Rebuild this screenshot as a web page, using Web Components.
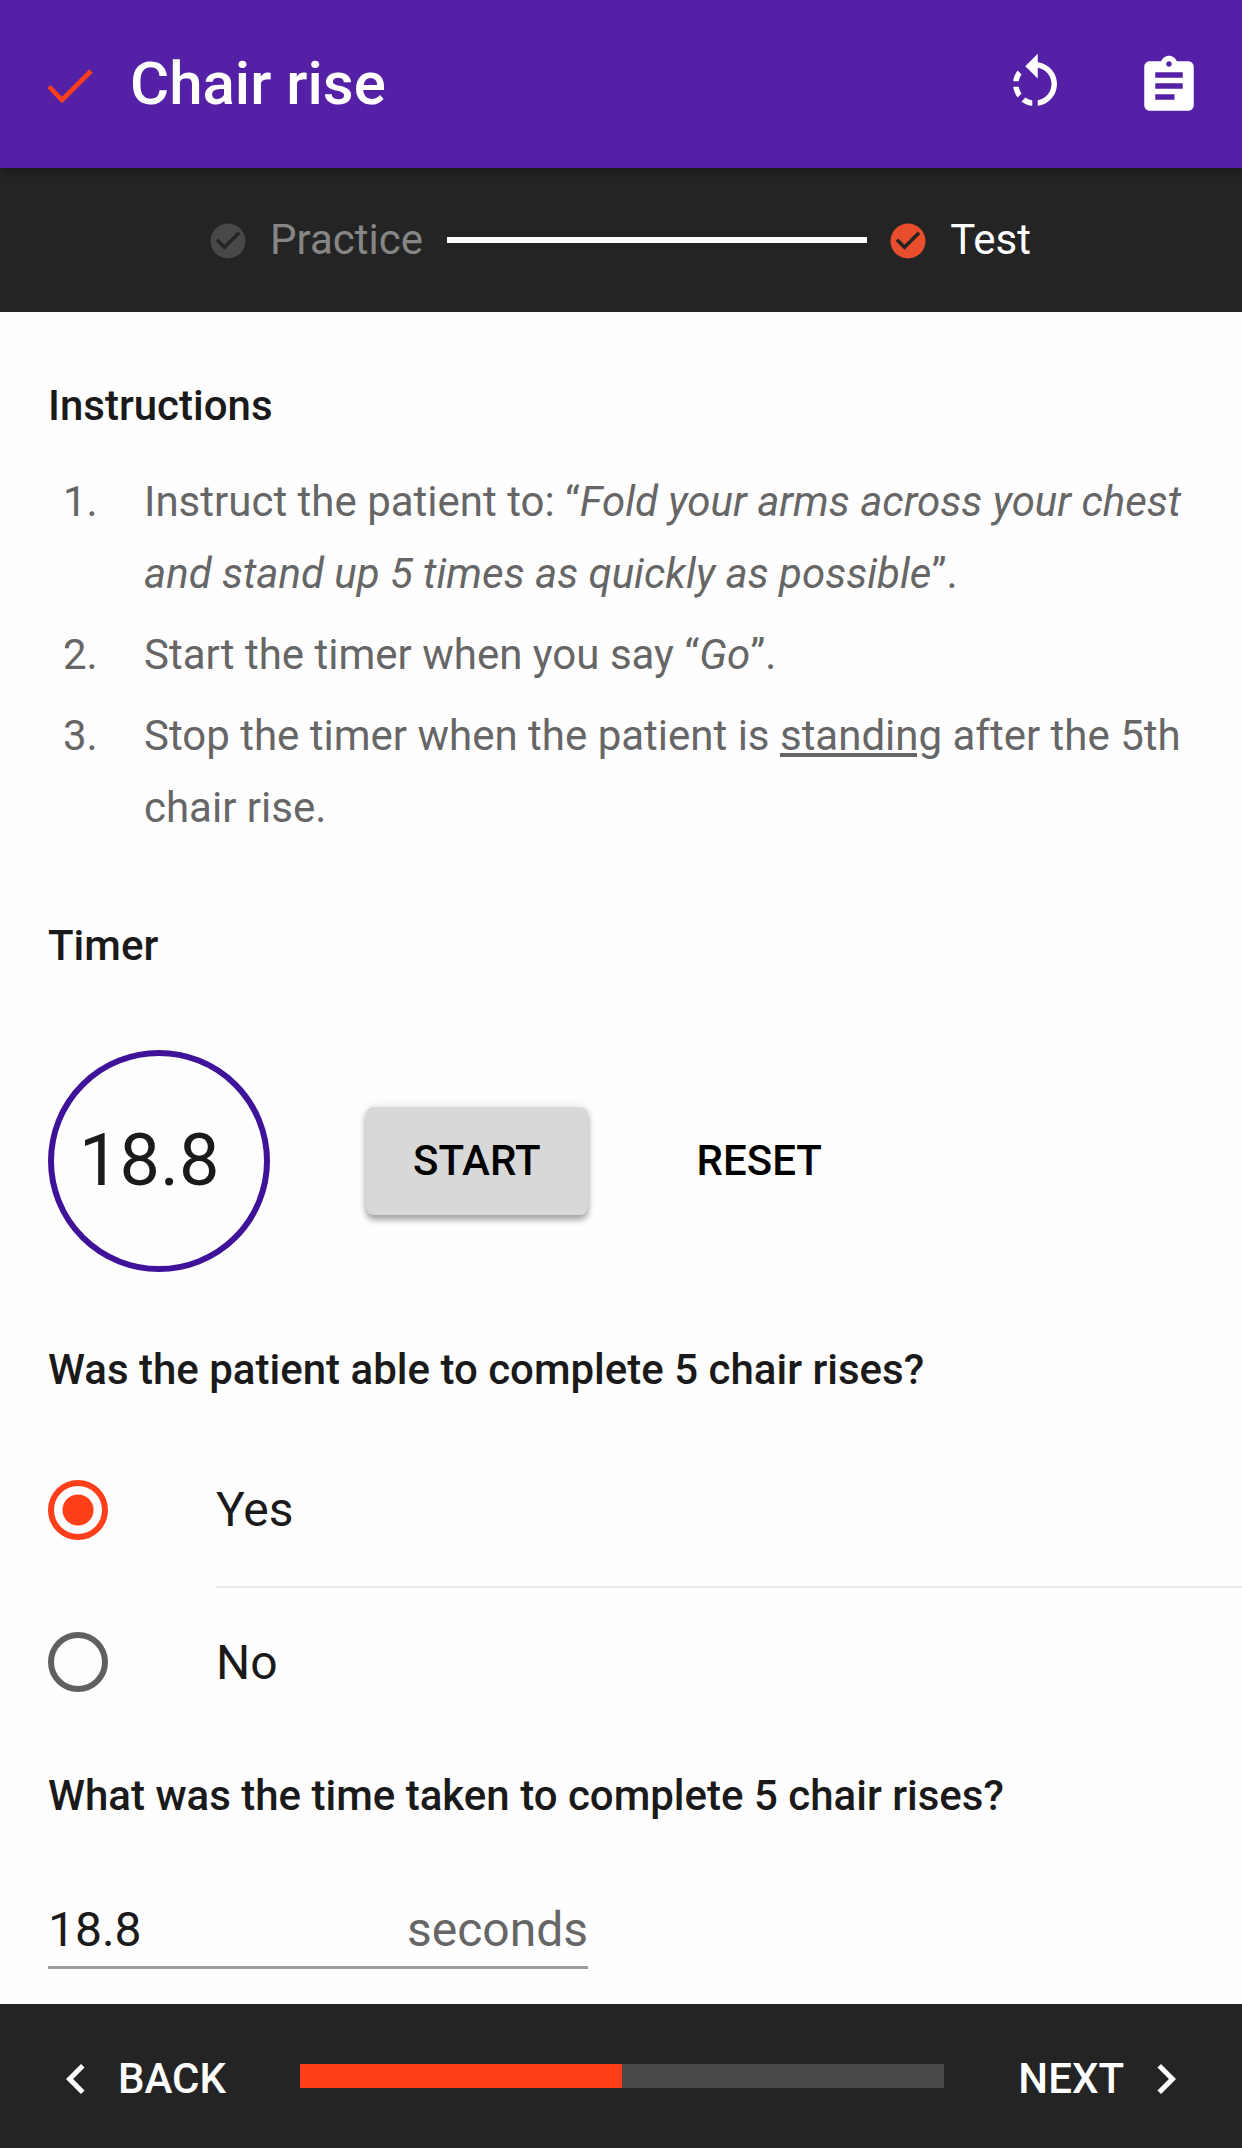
<!DOCTYPE html>
<html lang="en">
<head>
<meta charset="utf-8">
<meta name="viewport" content="width=device-width">
<title>Chair rise</title>
<style>
  body { margin: 0; background: #fefefe; color: #1a1a1a; font-family: Roboto, "Liberation Sans", sans-serif; font-size: 42px; line-height: 48px; }
</style>
</head>
<body>
<chair-rise-page></chair-rise-page>

<template id="t-page">
  <style>
    :host { display: flex; flex-direction: column; min-height: 100vh; }
    main { flex: 1; display: flex; flex-direction: column; padding: 70px 0 35px; }
    section-heading { padding: 0 48px; }
    instruction-list { margin-top: 36px; }
    .timer { margin-top: 78px; }
    stop-watch { margin: 80px 48px 74px; }
    time-field { margin: 34px 48px 0; }
  </style>
  <app-bar>Chair rise</app-bar>
  <step-tracker></step-tracker>
  <main>
    <section-heading>Instructions</section-heading>
    <instruction-list></instruction-list>
    <section-heading class="timer">Timer</section-heading>
    <stop-watch value="18.8"></stop-watch>
    <choice-group>Was the patient able to complete 5 chair rises?</choice-group>
    <time-field value="18.8" unit="seconds">What was the time taken to complete 5 chair rises?</time-field>
  </main>
  <nav-footer></nav-footer>
</template>

<template id="t-bar">
  <style>
    :host { display: flex; align-items: center; height: 168px; padding: 0 40px 0 37px; background: #5320a6; color: #fff; position: relative; z-index: 1; box-shadow: 0 3px 12px rgba(0,0,0,.35); }
    h1 { flex: 1; margin: 0 0 0 27px; font-size: 60px; line-height: 72px; font-weight: 500; }
    button { all: unset; display: flex; cursor: pointer; }
    button + button { margin-left: 68px; }
    svg { width: 66px; height: 66px; fill: currentColor; flex: none; }
  </style>
  <svg viewBox="0 0 66 66" aria-hidden="true"><path d="M12 35.5 25 49 54 20" fill="none" stroke="#ff3f1a" stroke-width="4.6"/></svg>
  <h1><slot></slot></h1>
  <button type="button" aria-label="Restart"><svg viewBox="0 0 24 24"><path d="M7.11 8.53L5.7 7.11C4.8 8.27 4.24 9.61 4.07 11h2.02c.14-.87.49-1.72 1.02-2.47zM6.09 13H4.07c.17 1.39.72 2.73 1.62 3.89l1.41-1.42c-.52-.75-.87-1.59-1.01-2.47zm1.01 5.32c1.16.9 2.51 1.44 3.9 1.61V17.9c-.87-.15-1.71-.49-2.46-1.03L7.1 18.32zM13 4.07V1L8.45 5.55 13 10V6.09c2.84.48 5 2.94 5 5.91s-2.16 5.43-5 5.91v2.02c3.95-.49 7-3.85 7-7.93s-3.05-7.44-7-7.93z"/></svg></button>
  <button type="button" aria-label="Notes"><svg viewBox="0 -.7 24 24"><path d="M19 3h-4.18C14.4 1.84 13.3 1 12 1c-1.3 0-2.4.84-2.82 2H5c-1.1 0-2 .9-2 2v14c0 1.1.9 2 2 2h14c1.1 0 2-.9 2-2V5c0-1.1-.9-2-2-2zm-7 0c.55 0 1 .45 1 1s-.45 1-1 1-1-.45-1-1 .45-1 1-1zm2 14H7v-2h7v2zm3-4H7v-2h10v2zm0-4H7V7h10v2z"/></svg></button>
</template>

<template id="t-tracker">
  <style>
    :host { display: flex; align-items: center; justify-content: center; gap: 24px; height: 144px; padding: 0 211px 0 207px; background: #242424; color: #fff; }
    .line { flex: 1; height: 6px; background: #fff; }
    .off { color: #868686; --badge: #484848; }
    .on { margin-left: -4px; --badge: #e84e2c; }
  </style>
  <step-item class="off">Practice</step-item>
  <div class="line"></div>
  <step-item class="on">Test</step-item>
</template>

<template id="t-step">
  <style>
    :host { display: flex; align-items: center; gap: 21px; }
    svg { width: 42px; height: 42px; fill: var(--badge); }
  </style>
  <svg viewBox="0 -.5 24 24" aria-hidden="true"><path d="M12 2C6.48 2 2 6.48 2 12s4.48 10 10 10 10-4.48 10-10S17.52 2 12 2zm-2 15l-5-5 1.41-1.41L10 14.17l7.59-7.59L19 8l-9 9z"/></svg>
  <span><slot></slot></span>
</template>

<template id="t-heading">
  <style>
    :host { display: block; }
    h2 { margin: 0; font-size: 42px; line-height: 48px; font-weight: 500; }
  </style>
  <h2><slot></slot></h2>
</template>

<template id="t-list">
  <style>
    :host { display: block; color: #666; line-height: 72px; }
    ol { list-style: none; margin: 0; padding: 0 48px 0 63px; display: flex; flex-direction: column; gap: 9px; }
    li { display: flex; }
    .n { flex: none; width: 81px; }
  </style>
  <ol>
    <li><span class="n">1.</span><span>Instruct the patient to: “<i>Fold your arms across your chest and stand up 5 times as quickly as possible</i>”.</span></li>
    <li><span class="n">2.</span><span>Start the timer when you say “<i>Go</i>”.</span></li>
    <li><span class="n">3.</span><span>Stop the timer when the patient is <u>standing</u> after the 5th chair rise.</span></li>
  </ol>
</template>

<template id="t-watch">
  <style>
    :host { display: flex; align-items: center; }
    output { box-sizing: border-box; width: 222px; height: 222px; padding-left: 25px; border: 6px solid #3f1399; border-radius: 50%; display: flex; align-items: center; font-size: 72px; line-height: 84px; }
    button { border: 0; background: none; color: #000; font: inherit; font-weight: 500; height: 108px; padding: 0 47px; border-radius: 8px; }
    .start { margin: 0 62px 0 96px; background: #d8d8d8; box-shadow: 0 5px 6px rgba(0,0,0,.32), 0 0 10px rgba(0,0,0,.12); }
  </style>
  <output></output>
  <button class="start" type="button">START</button>
  <button type="button">RESET</button>
</template>

<template id="t-choice">
  <style>
    :host { display: block; }
    fieldset { border: 0; margin: 0; padding: 0; min-width: 0; }
    legend { padding: 0 48px 40px; font-weight: 500; }
    label { display: flex; align-items: center; padding-left: 48px; font-size: 48px; line-height: 60px; }
    label span { flex: 1; height: 150px; display: flex; align-items: center; }
    label:not(:last-child) span { height: 152px; border-bottom: 2px solid #e8e8e8; }
    input { appearance: none; box-sizing: border-box; width: 60px; height: 60px; margin: 0 108px 2px 0; border: 6px solid #606060; border-radius: 50%; }
    input:checked { border-color: #ff3f1a; background: radial-gradient(circle, #ff3f1a 15px, transparent 16px); }
  </style>
  <fieldset>
    <legend><slot></slot></legend>
    <label><input type="radio" name="able" checked><span>Yes</span></label>
    <label><input type="radio" name="able"><span>No</span></label>
  </fieldset>
</template>

<template id="t-field">
  <style>
    :host { display: flex; flex-direction: column; gap: 80px; }
    label { font-weight: 500; }
    .box { box-sizing: border-box; width: 540px; display: flex; padding-bottom: 6px; border-bottom: 3px solid #9d9d9d; font-size: 48px; line-height: 60px; }
    input { flex: 1; min-width: 0; border: 0; padding: 0; background: none; outline: 0; font: inherit; color: inherit; height: 60px; }
    .unit { color: #666; }
  </style>
  <label for="time"><slot></slot></label>
  <div class="box"><input id="time" type="text" inputmode="decimal"><span class="unit"></span></div>
</template>

<template id="t-footer">
  <style>
    :host { display: flex; align-items: center; height: 144px; padding: 0 46px; background: #242424; color: #fff; }
    button { all: unset; display: flex; align-items: center; gap: 12px; padding-top: 6px; font-weight: 500; cursor: pointer; }
    svg { width: 60px; height: 60px; fill: currentColor; }
    .track { flex: 1; height: 24px; margin: 0 74px; background: #484848; }
    .fill { width: 50%; height: 100%; background: #ff3f1a; }
  </style>
  <button type="button"><svg viewBox="0 0 24 24" aria-hidden="true"><path d="M15.41 7.41L14 6l-6 6 6 6 1.41-1.41L10.83 12z"/></svg>BACK</button>
  <div class="track" role="progressbar" aria-label="Progress" aria-valuenow="50"><div class="fill"></div></div>
  <button type="button">NEXT<svg viewBox="0 0 24 24" aria-hidden="true"><path d="M10 6L8.59 7.41 13.17 12l-4.58 4.59L10 18l6-6z"/></svg></button>
</template>

<script>
  class TemplateElement extends HTMLElement {
    constructor() {
      super();
      const template = document.getElementById(this.constructor.template);
      this.attachShadow({ mode: "open" }).append(template.content.cloneNode(true));
    }
  }
  const define = (name, template) =>
    customElements.define(name, class extends TemplateElement { static template = template; });

  define("app-bar", "t-bar");
  define("step-item", "t-step");
  define("step-tracker", "t-tracker");
  define("section-heading", "t-heading");
  define("instruction-list", "t-list");
  define("choice-group", "t-choice");
  define("nav-footer", "t-footer");

  customElements.define("stop-watch", class extends TemplateElement {
    static template = "t-watch";
    connectedCallback() {
      this.shadowRoot.querySelector("output").textContent = this.getAttribute("value");
    }
  });
  customElements.define("time-field", class extends TemplateElement {
    static template = "t-field";
    connectedCallback() {
      this.shadowRoot.querySelector("input").value = this.getAttribute("value");
      this.shadowRoot.querySelector(".unit").textContent = this.getAttribute("unit");
    }
  });
  define("chair-rise-page", "t-page");
</script>
</body>
</html>
